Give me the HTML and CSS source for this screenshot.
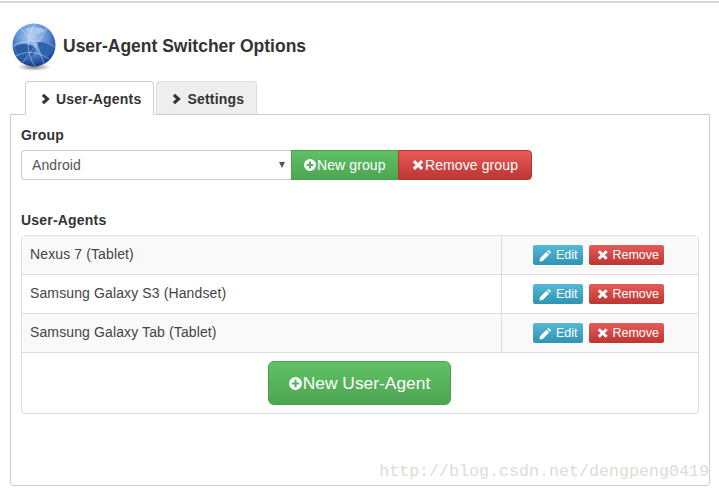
FILE: index.html
```html
<!DOCTYPE html>
<html lang="en">
<head>
    <meta charset="UTF-8">
    <title>User-Agent Switcher Options</title>
    <link rel="stylesheet" href="styles.css">
</head>
<body>
    <svg class="icon-defs" width="0" height="0">
        <defs>
            <symbol id="i-chevron" viewBox="0 0 10 12">
                <path d="M3 0.8 L8.8 6 L3 11.2 L0.8 9 L4.2 6 L0.8 3 Z"/>
            </symbol>
            <symbol id="i-plus" viewBox="0 0 12 12">
                <path fill-rule="evenodd" d="M6 0a6 6 0 1 0 0 12A6 6 0 0 0 6 0ZM5 2.6h2V5h2.4v2H7v2.4H5V7H2.6V5H5Z"/>
            </symbol>
            <symbol id="i-times" viewBox="0 0 12 12">
                <path d="M3 1 L6 4 L9 1 L11.2 3.2 L8.2 6 L11.2 8.8 L9 11 L6 8 L3 11 L0.8 8.8 L3.8 6 L0.8 3.2 Z"/>
            </symbol>
            <symbol id="i-pencil" viewBox="0 0 14 14">
                <path d="M10.2 0.8 L13.2 3.8 L11.8 5.2 L8.8 2.2 Z M8 3 L11 6 L4 13 L0.6 13.4 L1 10 Z"/>
            </symbol>
        </defs>
    </svg>

    <div class="page">
        <header class="page-header">
            <svg class="globe" viewBox="0 0 46 50" width="46" height="50">
                <defs>
                    <radialGradient id="sea" cx="0.45" cy="0.3" r="0.75">
                        <stop offset="0" stop-color="#b7d2f2"/>
                        <stop offset="0.5" stop-color="#5b8ed4"/>
                        <stop offset="0.85" stop-color="#1f4a9a"/>
                        <stop offset="1" stop-color="#122c66"/>
                    </radialGradient>
                    <radialGradient id="drop" cx="0.5" cy="0.5" r="0.5">
                        <stop offset="0" stop-color="#333" stop-opacity="0.65"/>
                        <stop offset="1" stop-color="#333" stop-opacity="0"/>
                    </radialGradient>
                </defs>
                <ellipse cx="23" cy="44" rx="17" ry="4" fill="url(#drop)"/>
                <circle cx="23" cy="22" r="21.5" fill="url(#sea)"/>
                <path d="M4 24 C10 19 20 21 24 25 C25 30 20 35 14 36 C9 34 5 30 4 24 Z" fill="#2a5ca8"/>
                <path d="M26 19 C32 17 39 19 43 24 C41 31 36 35 32 35 C31 29 27 25 26 19 Z" fill="#2f62ae"/>
                <path d="M14 6 C20 3 30 4 34 7 C30 12 20 13 14 6 Z" fill="#a9c8ee"/>
                <g fill="none" stroke="#eef4fc" stroke-width="0.6" opacity="0.75">
                    <path d="M2 23 C14 16 32 16 44 24"/>
                    <path d="M5 33 C16 27 28 29 38 36"/>
                    <path d="M24 1 C15 13 15 31 24 43"/>
                    <path d="M10 6 C20 15 30 29 33 41"/>
                    <path d="M36 5 C30 17 18 31 12 39"/>
                </g>
            </svg>
            <h1 class="page-title">User-Agent Switcher Options</h1>
        </header>

        <ul class="tabs">
            <li class="tab active"><svg class="tab-icon"><use href="#i-chevron"/></svg>User-Agents</li>
            <li class="tab"><svg class="tab-icon"><use href="#i-chevron"/></svg>Settings</li>
        </ul>

        <div class="tab-content">
            <label class="field-label">Group</label>
            <div class="group-row">
                <div class="select-box">
                    <span>Android</span>
                    <span class="select-arrow"></span>
                </div>
                <button class="btn btn-success btn-joined-left"><svg class="btn-icon"><use href="#i-plus"/></svg>New group</button>
                <button class="btn btn-danger btn-joined-right"><svg class="btn-icon"><use href="#i-times"/></svg>Remove group</button>
            </div>

            <label class="field-label agents-label">User-Agents</label>
            <div class="agents">
                <div class="agent-row odd">
                    <div class="agent-name">Nexus 7 (Tablet)</div>
                    <div class="agent-actions">
                        <button class="btn-xs btn-info"><svg class="xs-icon"><use href="#i-pencil"/></svg>Edit</button>
                        <button class="btn-xs btn-danger"><svg class="xs-icon"><use href="#i-times"/></svg>Remove</button>
                    </div>
                </div>
                <div class="agent-row">
                    <div class="agent-name">Samsung Galaxy S3 (Handset)</div>
                    <div class="agent-actions">
                        <button class="btn-xs btn-info"><svg class="xs-icon"><use href="#i-pencil"/></svg>Edit</button>
                        <button class="btn-xs btn-danger"><svg class="xs-icon"><use href="#i-times"/></svg>Remove</button>
                    </div>
                </div>
                <div class="agent-row odd">
                    <div class="agent-name">Samsung Galaxy Tab (Tablet)</div>
                    <div class="agent-actions">
                        <button class="btn-xs btn-info"><svg class="xs-icon"><use href="#i-pencil"/></svg>Edit</button>
                        <button class="btn-xs btn-danger"><svg class="xs-icon"><use href="#i-times"/></svg>Remove</button>
                    </div>
                </div>
                <div class="agents-footer">
                    <button class="btn btn-lg btn-success"><svg class="lg-icon"><use href="#i-plus"/></svg>New User-Agent</button>
                </div>
            </div>
            <div class="watermark">http://blog.csdn.net/dengpeng0419</div>
        </div>
    </div>
</body>
</html>
```

FILE: styles.css
```css
* {
    margin: 0;
    padding: 0;
    box-sizing: border-box;
}

html, body {
    height: 100%;
    overflow: hidden;
}

body {
    background-color: #fff;
    color: #333;
    font-family: "Liberation Sans", Arial, sans-serif;
    font-size: 14px;
}

.icon-defs {
    position: absolute;
}

.page {
    height: 485px;
    margin-top: 1px;
    border-top: 2px solid #d8d8d8;
    padding-left: 10px;
    padding-right: 9px;
    display: flex;
    flex-direction: column;
}

.page-header {
    height: 78px;
    padding-top: 20px;
    padding-left: 1px;
    display: flex;
    align-items: flex-start;
    gap: 6px;
}

.globe {
    flex: none;
}

.page-title {
    font-size: 17.5px;
    font-weight: bold;
    line-height: 20px;
    margin-top: 13px;
    color: #333;
}

.tabs {
    list-style: none;
    display: flex;
    gap: 2px;
    padding-left: 15px;
    height: 34px;
    margin-bottom: -1px;
    position: relative;
    z-index: 1;
}

.tab {
    height: 34px;
    padding: 9px 12px 0 15px;
    border: 1px solid #ddd;
    border-bottom-color: #ccc;
    border-radius: 4px 4px 0 0;
    background-color: #eee;
    font-weight: bold;
    font-size: 14px;
    line-height: 16px;
    letter-spacing: 0.2px;
    white-space: nowrap;
    display: flex;
    align-items: flex-start;
}

.tab.active {
    background-color: #fff;
    border-color: #ccc;
    border-bottom-color: #fff;
}

.tab-icon {
    width: 10px;
    height: 12px;
    margin-top: 2px;
    margin-right: 5px;
    fill: #333;
}

.tab-content {
    flex: 1;
    position: relative;
    border: 1px solid #ccc;
    border-radius: 0 0 4px 4px;
    padding: 12px 9px 0 10px;
}

.field-label {
    display: block;
    font-weight: bold;
    line-height: 16px;
    letter-spacing: 0.2px;
    margin-bottom: 7px;
}

.group-row {
    display: flex;
    height: 30px;
}

.select-box {
    width: 270px;
    height: 30px;
    padding: 0 10px;
    border: 1px solid #ccc;
    border-right: none;
    border-radius: 4px 0 0 4px;
    color: #555;
    line-height: 28px;
    letter-spacing: 0.1px;
    display: flex;
    justify-content: space-between;
    align-items: center;
}

.select-arrow {
    width: 0;
    height: 0;
    margin-right: -4px;
    border-left: 3.5px solid transparent;
    border-right: 3.5px solid transparent;
    border-top: 6px solid #555;
}

.btn {
    height: 30px;
    border: 1px solid;
    color: #fff;
    font-family: inherit;
    font-size: 14px;
    letter-spacing: 0.1px;
    display: inline-flex;
    align-items: center;
    white-space: nowrap;
}

.btn-icon {
    width: 12px;
    height: 12px;
    fill: #fff;
    margin-right: 1px;
}

.btn-success {
    background: linear-gradient(to bottom, #5fc165, #4fa552);
    border-color: #4a9e4e;
}

.btn-danger {
    background: linear-gradient(to bottom, #e55b59, #bd3632);
    border-color: #b93431;
}

.btn-info {
    background: linear-gradient(to bottom, #55b8d7, #2f93b4);
    border-color: #2b8aa9;
}

.btn-joined-left {
    width: 107px;
    padding-left: 12px;
    border-right: none;
}

.btn-joined-right {
    width: 134px;
    padding-left: 13px;
    border-radius: 0 4px 4px 0;
}

.agents-label {
    margin-top: 32px;
    margin-bottom: 7px;
}

.agents {
    width: 678px;
    height: 179px;
    border: 1px solid #ddd;
    border-radius: 4px;
}

.agent-row {
    height: 39px;
    display: flex;
    border-bottom: 1px solid #ddd;
    background-color: #fff;
}

.agent-row.odd {
    background-color: #f9f9f9;
}

.agent-name {
    width: 480px;
    padding-left: 8px;
    line-height: 37px;
    letter-spacing: 0.12px;
    color: #444;
    border-right: 1px solid #ddd;
}

.agent-actions {
    flex: 1;
    padding-left: 31px;
    display: flex;
    align-items: center;
    gap: 4px;
}

.agent-actions .btn-xs:first-child {
    margin-left: -1px;
    width: 52px;
}

.btn-xs {
    height: 22px;
    border: 1px solid;
    border-radius: 3px;
    color: #fff;
    font-family: inherit;
    font-size: 12.5px;
    display: inline-flex;
    align-items: center;
    padding: 0 5px 0 6px;
    white-space: nowrap;
}

.btn-xs.btn-danger {
    width: 77px;
    padding-left: 8px;
}

.xs-icon {
    width: 13px;
    height: 13px;
    fill: #fff;
    margin-right: 4px;
}

.btn-danger .xs-icon {
    width: 12px;
    height: 12px;
}

.agents-footer {
    display: flex;
    justify-content: center;
    padding-top: 8px;
    padding-right: 1px;
}

.btn-lg {
    width: 183px;
    height: 44px;
    border-radius: 6px;
    font-size: 17.4px;
    letter-spacing: 0;
    justify-content: center;
}

.lg-icon {
    width: 13px;
    height: 13px;
    fill: #fff;
    margin-right: 1px;
}

.watermark {
    position: absolute;
    right: 0;
    bottom: 4px;
    font-family: "Liberation Mono", "DejaVu Sans Mono", monospace;
    font-size: 16.67px;
    color: #dcdcd8;
    white-space: nowrap;
}
```
